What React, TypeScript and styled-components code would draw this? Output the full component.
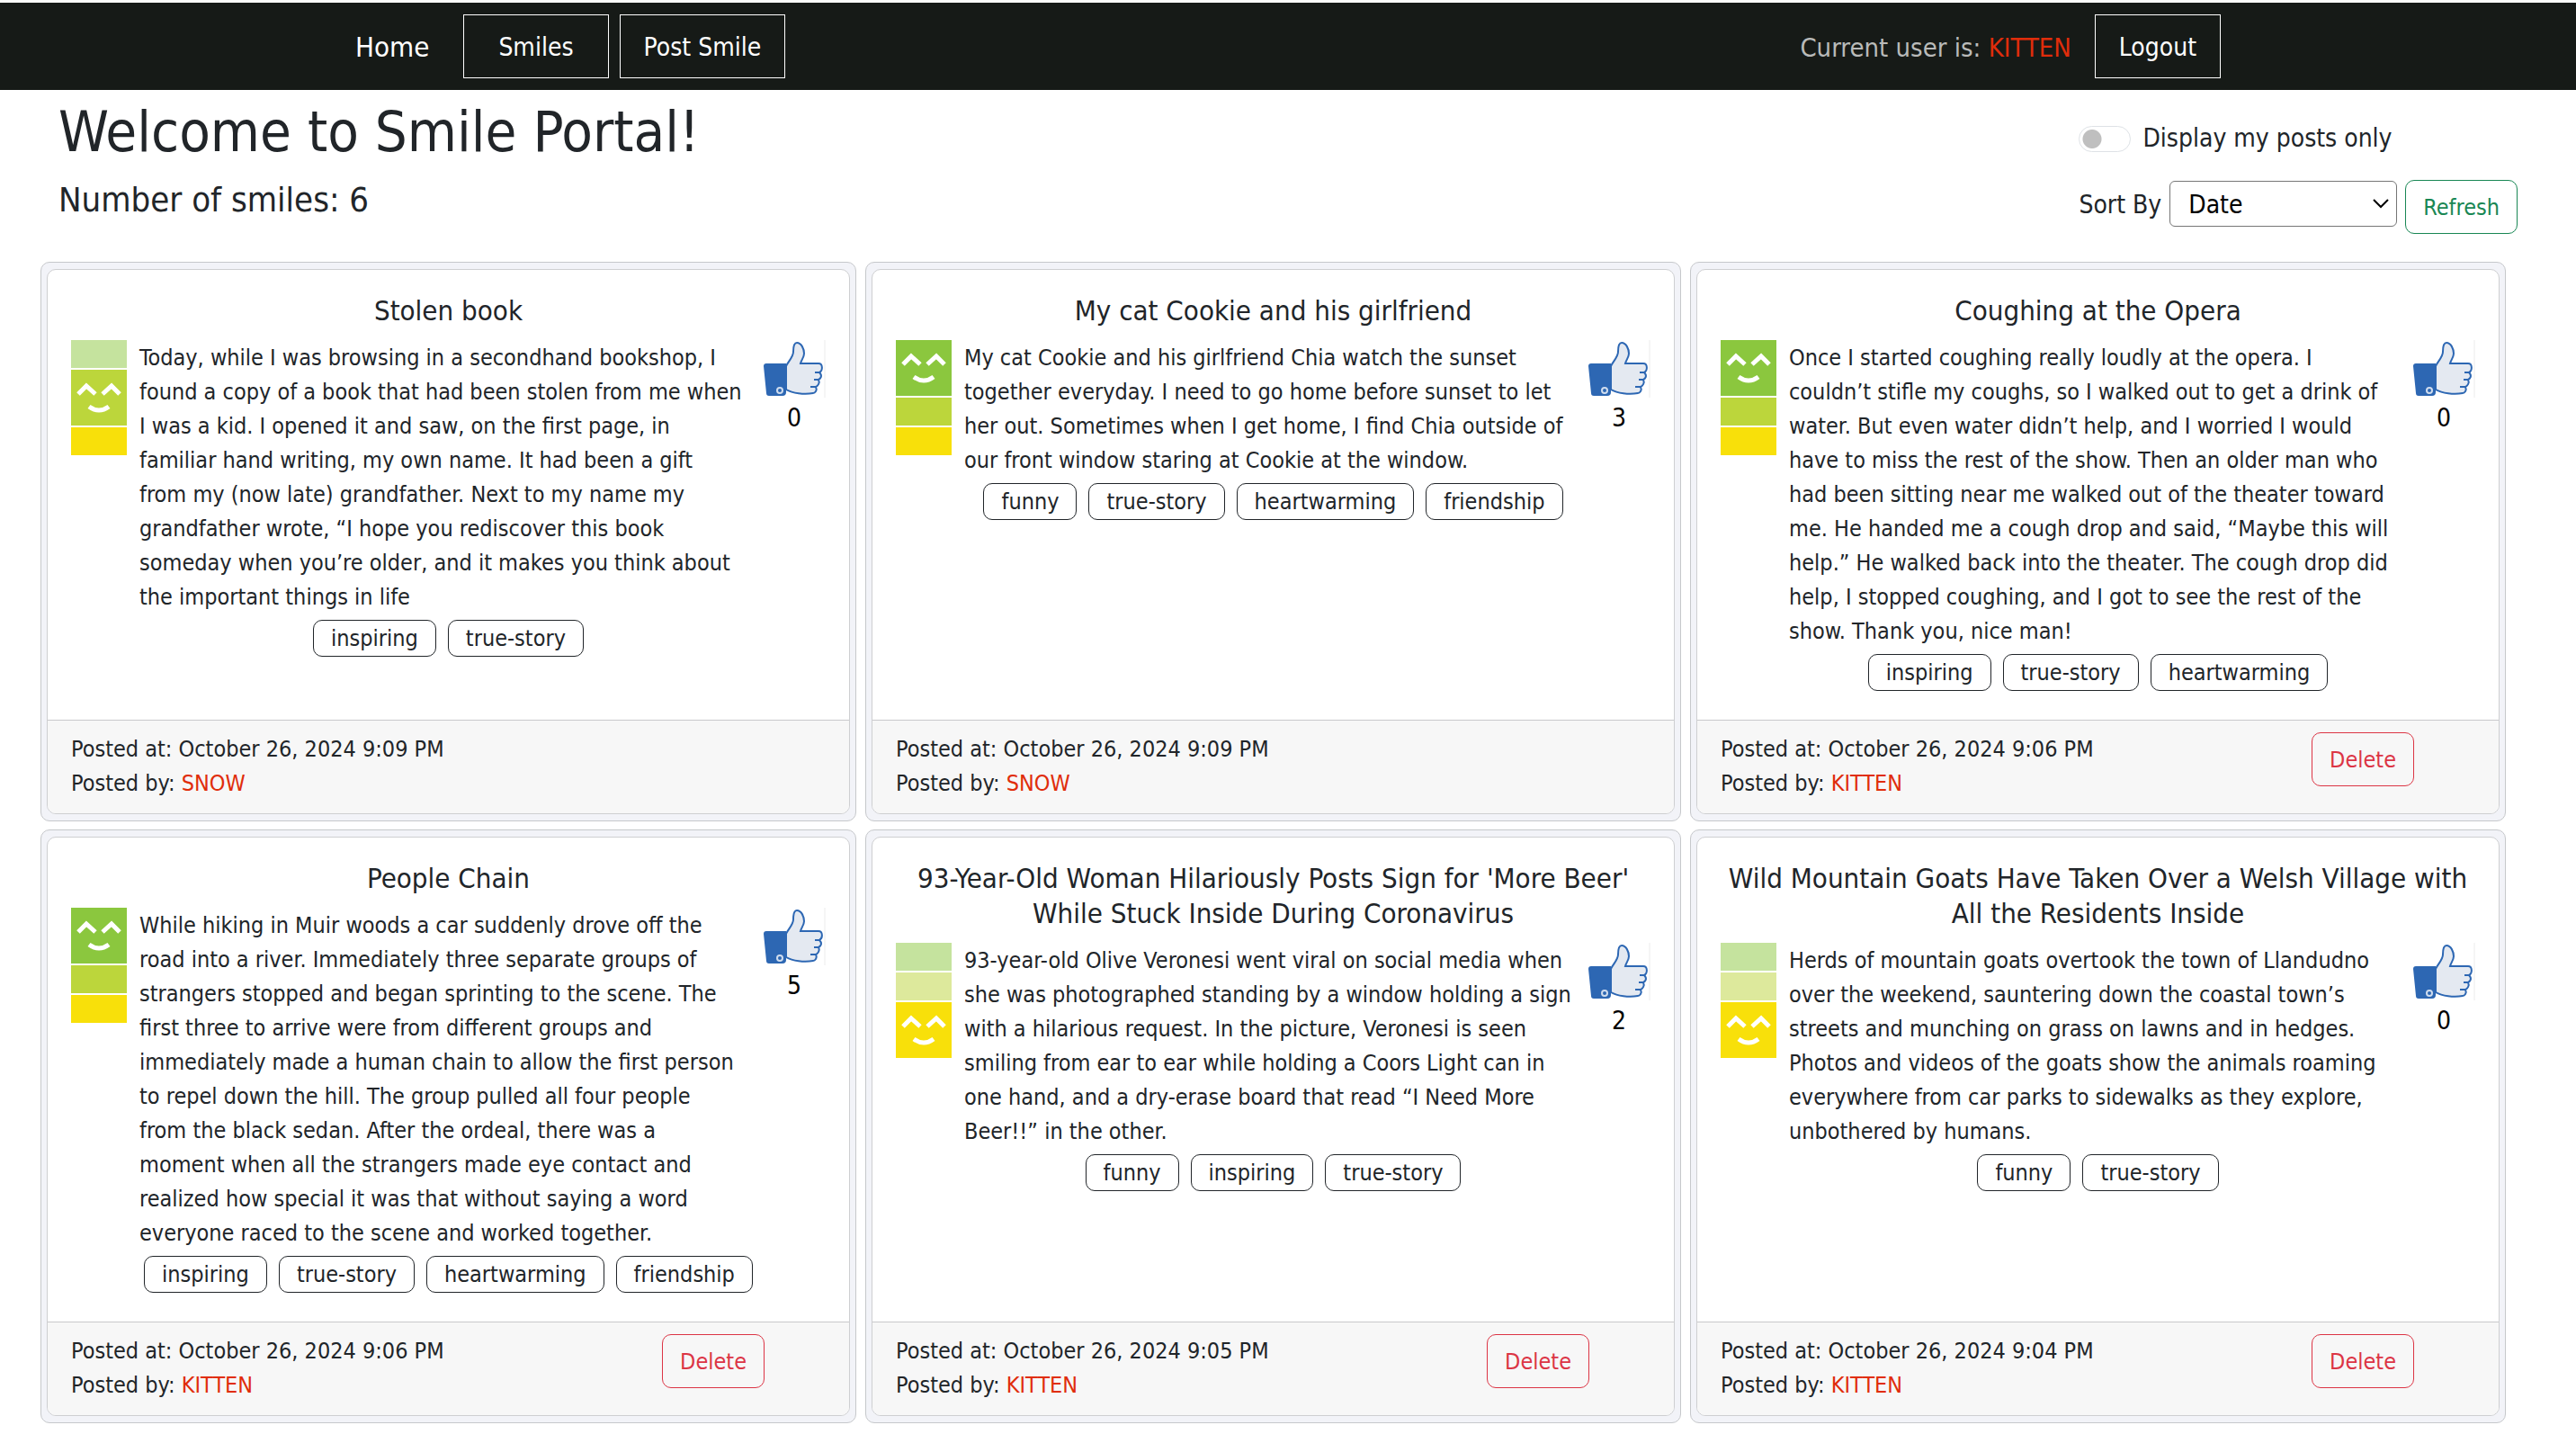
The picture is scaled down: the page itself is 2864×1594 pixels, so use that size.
import React, { useState } from 'react';
import styled, { createGlobalStyle } from 'styled-components';

const GlobalStyle = createGlobalStyle`
  *, *::before, *::after { box-sizing: border-box; }
  body {
    margin: 0;
    background: #fff;
    color: #212529;
    font-family: "DejaVu Sans Condensed", Roboto, sans-serif;
    font-size: 25px;
    line-height: 38px;
  }
  button, select, input { font-family: inherit; }
`;

const NavBar = styled.nav`
  background: #161a17;
  border-top: 3px solid #fbfcfb;
`;

const NavInner = styled.div`
  display: flex;
  align-items: center;
  justify-content: space-between;
  max-width: 2112px;
  margin: 0 auto;
  padding: 13px 19px;
`;

const NavGroup = styled.div<{ $gap: number }>`
  display: flex;
  align-items: center;
  gap: ${(p) => p.$gap}px;
`;

const Brand = styled.a`
  color: #fff;
  font-size: 31px;
  text-decoration: none;
  margin-right: 26px;
`;

const NavLink = styled.a<{ $wide?: boolean }>`
  display: block;
  padding: 17px ${(p) => (p.$wide ? 38 : 26)}px 14px;
  border: 1px solid #fff;
  color: #fff;
  font-size: 28px;
  text-decoration: none;
`;

const LogoutButton = styled.button`
  padding: 17px 26px 14px;
  border: 1px solid #fff;
  background: transparent;
  color: #fff;
  font-size: 28px;
  line-height: 38px;
`;

const CurrentUser = styled.span`
  padding-top: 2px;
  color: #b9bab9;
  font-size: 29px;
`;

const UserName = styled.span`
  color: #e02d0b;
`;

const Header = styled.header`
  display: flex;
  justify-content: space-between;
  padding: 8px 65px 31px;
`;

const Heading = styled.h1`
  margin: 0 0 14px;
  font-size: 63px;
  font-weight: 400;
  line-height: 77px;
`;

const SubHeading = styled.h4`
  margin: 0;
  font-size: 38px;
  font-weight: 400;
  line-height: 46px;
`;

const Controls = styled.div`
  display: flex;
  flex-direction: column;
  gap: 27px;
  padding-top: 27px;
  font-size: 28px;
`;

const SwitchLabel = styled.label`
  display: flex;
  align-items: center;
  gap: 13px;
`;

const Switch = styled.input`
  appearance: none;
  width: 58px;
  height: 29px;
  margin: 0;
  border: 1px solid #dee2e6;
  border-radius: 15px;
  background: radial-gradient(circle at 14px 50%, #bfbfbf 10px, transparent 11px);
  &:checked {
    background: radial-gradient(circle at 42px 50%, #fff 10px, #198754 11px);
  }
`;

const SortRow = styled.div`
  display: flex;
  align-items: flex-start;
  gap: 9px;
`;

const SortLabel = styled.label`
  line-height: 55px;
`;

const SelectBox = styled.div`
  position: relative;
  width: 253px;
  padding-top: 1px;
  svg {
    position: absolute;
    right: 9px;
    top: 21px;
    pointer-events: none;
  }
`;

const Select = styled.select`
  appearance: none;
  display: block;
  width: 100%;
  height: 51px;
  padding: 2px 20px 0;
  border: 1px solid #767676;
  border-radius: 6px;
  background: #fff;
  color: #000;
  font-size: 28px;
`;

const OutlineButton = styled.button<{ $color: string }>`
  height: 60px;
  padding: 0 19px;
  border: 1px solid ${(p) => p.$color};
  border-radius: 10px;
  background: transparent;
  color: ${(p) => p.$color};
  font-size: 25px;
`;

const Grid = styled.main`
  display: grid;
  grid-template-columns: repeat(3, minmax(0, 1fr));
  gap: 9px 10px;
  padding: 0 78px 12px 45px;
`;

const Frame = styled.div`
  display: flex;
  padding: 7px 6px;
  border: 1px solid #c6c8cb;
  border-radius: 10px;
  background: #f2f3f8;
`;

const Card = styled.article`
  display: flex;
  flex: 1;
  flex-direction: column;
  overflow: hidden;
  border: 1px solid #cecfd1;
  border-radius: 10px;
  background: #fff;
`;

const CardBody = styled.div`
  flex: 1;
  padding: 26px 26px 32px;
`;

const CardTitle = styled.h5`
  margin: 0 0 13px;
  font-size: 31px;
  font-weight: 400;
  line-height: 39px;
  text-align: center;
`;

const CardRow = styled.div`
  display: flex;
`;

const Story = styled.div`
  flex: 1;
  margin-left: 14px;
  padding-top: 1px;
`;

const StoryText = styled.p`
  margin: 0 0 6px;
  white-space: pre;
`;

const Tags = styled.div`
  display: flex;
  justify-content: center;
  gap: 13px;
`;

const Tag = styled.button`
  height: 41px;
  padding: 0 19px;
  border: 1px solid #212529;
  border-radius: 10px;
  background: #fff;
  color: #212529;
  font-size: 25px;
`;

const LikeButton = styled.button`
  display: flex;
  flex-direction: column;
  align-items: center;
  gap: 4px;
  width: 70px;
  margin-left: 6px;
  padding: 0;
  border: 0;
  background: none;
  color: #000;
  font-size: 28px;
  line-height: 38px;
`;

const CardFooter = styled.footer`
  display: flex;
  align-items: flex-start;
  justify-content: space-between;
  height: 104px;
  padding: 13px 94px 13px 26px;
  border-top: 1px solid #c8c9cb;
  background: #f7f7f7;
`;

const ScaleDrawing = styled.svg`
  flex-shrink: 0;
`;

type Level = 0 | 1 | 2;

const FULL = ['#8bc73e', '#bcd63b', '#f8e00a'];
const FADED = ['#c5e39e', '#dde99c', '#fbef84'];

function SmileScale({ level }: { level: Level }) {
  let y = 0;
  return (
    <ScaleDrawing width="62" height="130" viewBox="0 0 62 130" aria-hidden="true">
      {FULL.map((color, i) => {
        const active = i === level;
        const height = active ? 62 : 31;
        const top = y;
        y += height + 2;
        return (
          <g key={color} transform={`translate(0 ${top})`}>
            <rect width="62" height={height} fill={i < level ? FADED[i] : color} />
            {active && (
              <g fill="none" stroke="#fff" strokeWidth="5">
                <path d="M8 27 L17 18 L27 27" />
                <path d="M35 27 L45 18 L54 27" />
                <path d="M20 41 Q31 49 42 41" />
              </g>
            )}
          </g>
        );
      })}
    </ScaleDrawing>
  );
}

function ThumbUp() {
  return (
    <svg width="70" height="64" viewBox="0 0 70 64" aria-hidden="true">
      <path
        d="M26 29 C28 24 34 19 34 13 C34 9 34 3 38 3 C43 3 46 10 46 15 C46 19 43 22 42 26 H62 C67 26 67 34 63 36 C67 40 64 43 62 44 C64 48 61 51 59 52 C61 56 58 59 56 59 C46 61 33 59 26 55 Z"
        fill="#e4e9f1"
        stroke="#2d67b3"
        strokeWidth="2"
      />
      <path d="M63 36 H58 M62 44 H57 M59 52 H53" stroke="#2d67b3" strokeWidth="2" />
      <path d="M4 26 H26 V58 Q26 62 22 62 H7 Q4 62 4 59 L1 29 Q1 26 4 26 Z" fill="#2d67b3" />
      <circle cx="19" cy="56" r="3" fill="none" stroke="#cfdcee" strokeWidth="2" />
      <path d="M69 0 V64" stroke="#ececec" />
    </svg>
  );
}

interface Post {
  title: string;
  level: Level;
  text: string[];
  tags: string[];
  likes: number;
  date: string;
  author: string;
}

const ME = 'KITTEN';

const POSTS: Post[] = [
  {
    title: 'Stolen book',
    level: 1,
    text: [
      'Today, while I was browsing in a secondhand bookshop, I',
      'found a copy of a book that had been stolen from me when',
      'I was a kid. I opened it and saw, on the first page, in',
      'familiar hand writing, my own name. It had been a gift',
      'from my (now late) grandfather. Next to my name my',
      'grandfather wrote, “I hope you rediscover this book',
      'someday when you’re older, and it makes you think about',
      'the important things in life',
    ],
    tags: ['inspiring', 'true-story'],
    likes: 0,
    date: 'October 26, 2024 9:09 PM',
    author: 'SNOW',
  },
  {
    title: 'My cat Cookie and his girlfriend',
    level: 0,
    text: [
      'My cat Cookie and his girlfriend Chia watch the sunset',
      'together everyday. I need to go home before sunset to let',
      'her out. Sometimes when I get home, I find Chia outside of',
      'our front window staring at Cookie at the window.',
    ],
    tags: ['funny', 'true-story', 'heartwarming', 'friendship'],
    likes: 3,
    date: 'October 26, 2024 9:09 PM',
    author: 'SNOW',
  },
  {
    title: 'Coughing at the Opera',
    level: 0,
    text: [
      'Once I started coughing really loudly at the opera. I',
      'couldn’t stifle my coughs, so I walked out to get a drink of',
      'water. But even water didn’t help, and I worried I would',
      'have to miss the rest of the show. Then an older man who',
      'had been sitting near me walked out of the theater toward',
      'me. He handed me a cough drop and said, “Maybe this will',
      'help.” He walked back into the theater. The cough drop did',
      'help, I stopped coughing, and I got to see the rest of the',
      'show. Thank you, nice man!',
    ],
    tags: ['inspiring', 'true-story', 'heartwarming'],
    likes: 0,
    date: 'October 26, 2024 9:06 PM',
    author: ME,
  },
  {
    title: 'People Chain',
    level: 0,
    text: [
      'While hiking in Muir woods a car suddenly drove off the',
      'road into a river. Immediately three separate groups of',
      'strangers stopped and began sprinting to the scene. The',
      'first three to arrive were from different groups and',
      'immediately made a human chain to allow the first person',
      'to repel down the hill. The group pulled all four people',
      'from the black sedan. After the ordeal, there was a',
      'moment when all the strangers made eye contact and',
      'realized how special it was that without saying a word',
      'everyone raced to the scene and worked together.',
    ],
    tags: ['inspiring', 'true-story', 'heartwarming', 'friendship'],
    likes: 5,
    date: 'October 26, 2024 9:06 PM',
    author: ME,
  },
  {
    title: "93-Year-Old Woman Hilariously Posts Sign for 'More Beer' While Stuck Inside During Coronavirus",
    level: 2,
    text: [
      '93-year-old Olive Veronesi went viral on social media when',
      'she was photographed standing by a window holding a sign',
      'with a hilarious request. In the picture, Veronesi is seen',
      'smiling from ear to ear while holding a Coors Light can in',
      'one hand, and a dry-erase board that read “I Need More',
      'Beer!!” in the other.',
    ],
    tags: ['funny', 'inspiring', 'true-story'],
    likes: 2,
    date: 'October 26, 2024 9:05 PM',
    author: ME,
  },
  {
    title: 'Wild Mountain Goats Have Taken Over a Welsh Village with All the Residents Inside',
    level: 2,
    text: [
      'Herds of mountain goats overtook the town of Llandudno',
      'over the weekend, sauntering down the coastal town’s',
      'streets and munching on grass on lawns and in hedges.',
      'Photos and videos of the goats show the animals roaming',
      'everywhere from car parks to sidewalks as they explore,',
      'unbothered by humans.',
    ],
    tags: ['funny', 'true-story'],
    likes: 0,
    date: 'October 26, 2024 9:04 PM',
    author: ME,
  },
];

function PostCard({ post }: { post: Post }) {
  return (
    <Frame>
      <Card>
        <CardBody>
          <CardTitle>{post.title}</CardTitle>
          <CardRow>
            <SmileScale level={post.level} />
            <Story>
              <StoryText>{post.text.join('\n')}</StoryText>
              <Tags>
                {post.tags.map((tag) => (
                  <Tag key={tag}>{tag}</Tag>
                ))}
              </Tags>
            </Story>
            <div>
              <LikeButton aria-label={`Like, ${post.likes}`}>
                <ThumbUp />
                {post.likes}
              </LikeButton>
            </div>
          </CardRow>
        </CardBody>
        <CardFooter>
          <div>
            <div>Posted at: {post.date}</div>
            <div>
              Posted by: <UserName>{post.author}</UserName>
            </div>
          </div>
          {post.author === ME && <OutlineButton $color="#dc3545">Delete</OutlineButton>}
        </CardFooter>
      </Card>
    </Frame>
  );
}

export default function App() {
  const [mineOnly, setMineOnly] = useState(false);
  const posts = mineOnly ? POSTS.filter((p) => p.author === ME) : POSTS;
  return (
    <>
      <GlobalStyle />
      <NavBar>
        <NavInner>
          <NavGroup $gap={12}>
            <Brand href="#home">Home</Brand>
            <NavLink href="#smiles" $wide>Smiles</NavLink>
            <NavLink href="#post">Post Smile</NavLink>
          </NavGroup>
          <NavGroup $gap={26}>
            <CurrentUser>
              Current user is: <UserName>{ME}</UserName>
            </CurrentUser>
            <LogoutButton>Logout</LogoutButton>
          </NavGroup>
        </NavInner>
      </NavBar>
      <Header>
        <div>
          <Heading>Welcome to Smile Portal!</Heading>
          <SubHeading>Number of smiles: {posts.length}</SubHeading>
        </div>
        <Controls>
          <SwitchLabel>
            <Switch
              type="checkbox"
              role="switch"
              checked={mineOnly}
              onChange={(e) => setMineOnly(e.target.checked)}
            />
            Display my posts only
          </SwitchLabel>
          <SortRow>
            <SortLabel htmlFor="sort">Sort By</SortLabel>
            <SelectBox>
              <Select id="sort" defaultValue="Date">
                <option>Date</option>
                <option>Likes</option>
              </Select>
              <svg width="18" height="12" viewBox="0 0 18 12" aria-hidden="true">
                <path d="M1 1 L9 9 L17 1" fill="none" stroke="#000" strokeWidth="2" />
              </svg>
            </SelectBox>
            <OutlineButton $color="#198754">Refresh</OutlineButton>
          </SortRow>
        </Controls>
      </Header>
      <Grid>
        {posts.map((post) => (
          <PostCard key={post.title} post={post} />
        ))}
      </Grid>
    </>
  );
}
